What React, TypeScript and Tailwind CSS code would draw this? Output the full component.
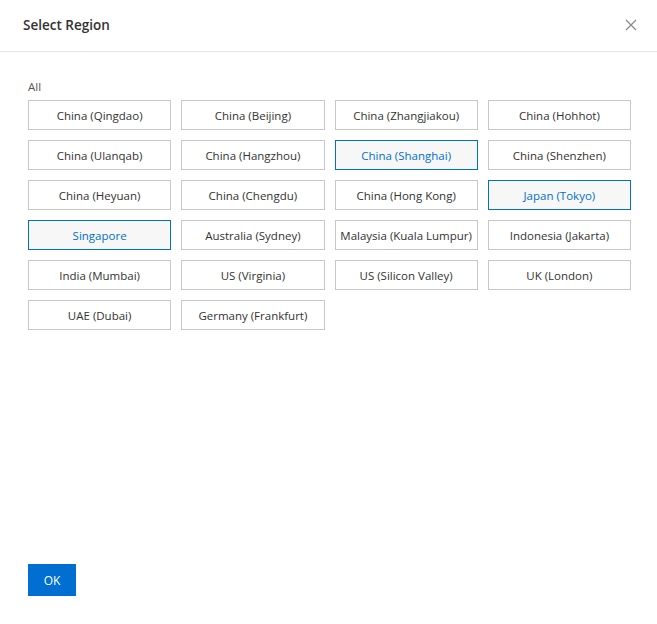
import { useState } from "react";

const regions = [
  "China (Qingdao)",
  "China (Beijing)",
  "China (Zhangjiakou)",
  "China (Hohhot)",
  "China (Ulanqab)",
  "China (Hangzhou)",
  "China (Shanghai)",
  "China (Shenzhen)",
  "China (Heyuan)",
  "China (Chengdu)",
  "China (Hong Kong)",
  "Japan (Tokyo)",
  "Singapore",
  "Australia (Sydney)",
  "Malaysia (Kuala Lumpur)",
  "Indonesia (Jakarta)",
  "India (Mumbai)",
  "US (Virginia)",
  "US (Silicon Valley)",
  "UK (London)",
  "UAE (Dubai)",
  "Germany (Frankfurt)",
];

export default function App() {
  const [selected, setSelected] = useState<string[]>([
    "China (Shanghai)",
    "Japan (Tokyo)",
    "Singapore",
  ]);

  const toggle = (r: string) =>
    setSelected((s) => (s.includes(r) ? s.filter((x) => x !== r) : [...s, r]));

  return (
    <div className="flex h-[624px] w-[657px] flex-col bg-white font-['Open_Sans',sans-serif] text-[#333]">
      <div className="flex h-[52px] items-center justify-between border-b border-[#e5e5e5] pl-[23px] pr-[20px]">
        <h3 className="-mt-[1px] text-[13.5px] font-semibold text-[#333]">Select Region</h3>
        <button type="button" className="-mt-[1px] text-[#888]">
          <svg width="12" height="12" viewBox="0 0 12 12" stroke="currentColor" strokeWidth="1.2">
            <path d="M1 1L11 11M11 1L1 11" />
          </svg>
        </button>
      </div>

      <div className="flex-1 pl-[28px] pr-[26px] pt-[27px]">
        <p className="mb-[5px] text-[11.5px] leading-[16px] text-[#555]">All</p>
        <div className="grid grid-cols-4 gap-[10px]">
          {regions.map((r) => {
            const on = selected.includes(r);
            return (
              <button
                key={r}
                type="button"
                onClick={() => toggle(r)}
                className={
                  on
                    ? "h-[30px] border border-[#0070cc] bg-[#f7f7f7] pt-[2px] text-[11.5px] text-[#0070cc]"
                    : "h-[30px] border border-[#c8c8c8] bg-white pt-[2px] text-[11.5px] text-[#333]"
                }
              >
                {r}
              </button>
            );
          })}
        </div>
      </div>

      <div className="pb-[28px] pl-[28px]">
        <button type="button" className="h-[32px] w-[48px] bg-[#006fd1] pt-[1px] text-[12px] text-white">
          OK
        </button>
      </div>
    </div>
  );
}
